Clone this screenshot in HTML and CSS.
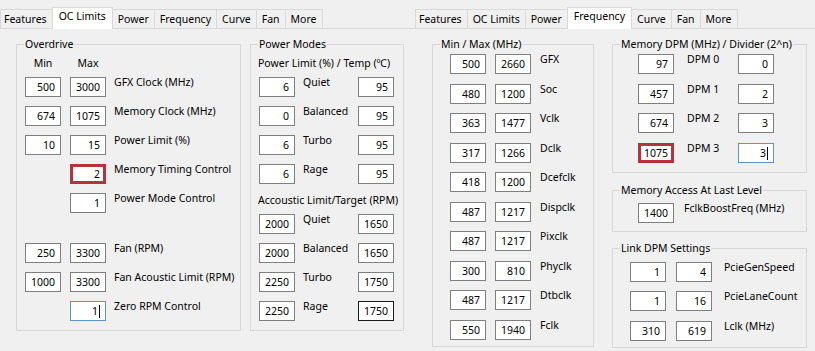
FILE: index.html
```html
<!DOCTYPE html>
<html lang="en">
<head>
    <meta charset="UTF-8">
    <meta name="viewport" content="width=device-width, initial-scale=1.0">
    <title>OC Limits / Frequency</title>
    <link rel="stylesheet" href="styles.css">
</head>
<body>
    <!-- first window: OC Limits tab -->
    <div class="window">
        <div class="tabs">
            <span class="tab">Features</span>
            <span class="tab active">OC Limits</span>
            <span class="tab">Power</span>
            <span class="tab">Frequency</span>
            <span class="tab">Curve</span>
            <span class="tab">Fan</span>
            <span class="tab">More</span>
        </div>
        <div class="page oc">
            <fieldset class="group overdrive">
                <legend>Overdrive</legend>
                <div class="rows">
                    <div class="head">
                        <span class="col-head">Min</span>
                        <span class="col-head">Max</span>
                    </div>
                    <div class="row"><span class="box">500</span><span class="box">3000</span><span class="label">GFX Clock (MHz)</span></div>
                    <div class="row"><span class="box">674</span><span class="box">1075</span><span class="label">Memory Clock (MHz)</span></div>
                    <div class="row"><span class="box">10</span><span class="box">15</span><span class="label">Power Limit (%)</span></div>
                    <div class="row"><span class="slot"></span><span class="box warn">2</span><span class="label">Memory Timing Control</span></div>
                    <div class="row"><span class="slot"></span><span class="box">1</span><span class="label">Power Mode Control</span></div>
                    <div class="row spaced"><span class="box">250</span><span class="box">3300</span><span class="label">Fan (RPM)</span></div>
                    <div class="row"><span class="box">1000</span><span class="box">3300</span><span class="label">Fan Acoustic Limit (RPM)</span></div>
                    <div class="row"><span class="slot"></span><span class="box focus">1<span class="caret"></span></span><span class="label">Zero RPM Control</span></div>
                </div>
            </fieldset>
            <fieldset class="group modes">
                <legend>Power Modes</legend>
                <div class="rows">
                    <div class="head">Power Limit (%) / Temp (℃)</div>
                    <div class="row"><span class="box">6</span><span class="label">Quiet</span><span class="box">95</span></div>
                    <div class="row"><span class="box">0</span><span class="label">Balanced</span><span class="box">95</span></div>
                    <div class="row"><span class="box">6</span><span class="label">Turbo</span><span class="box">95</span></div>
                    <div class="row"><span class="box">6</span><span class="label">Rage</span><span class="box">95</span></div>
                    <div class="head second">Accoustic Limit/Target (RPM)</div>
                    <div class="row"><span class="box">2000</span><span class="label">Quiet</span><span class="box">1650</span></div>
                    <div class="row"><span class="box">2000</span><span class="label">Balanced</span><span class="box">1650</span></div>
                    <div class="row"><span class="box">2250</span><span class="label">Turbo</span><span class="box">1750</span></div>
                    <div class="row"><span class="box">2250</span><span class="label">Rage</span><span class="box hover">1750</span></div>
                </div>
            </fieldset>
        </div>
    </div>

    <!-- second window: Frequency tab -->
    <div class="window narrow">
        <div class="tabs">
            <span class="tab">Features</span>
            <span class="tab">OC Limits</span>
            <span class="tab">Power</span>
            <span class="tab active">Frequency</span>
            <span class="tab">Curve</span>
            <span class="tab">Fan</span>
            <span class="tab">More</span>
        </div>
        <div class="page freq">
            <fieldset class="group minmax">
                <legend>Min / Max (MHz)</legend>
                <div class="rows">
                    <div class="row"><span class="box">500</span><span class="box">2660</span><span class="label">GFX</span></div>
                    <div class="row"><span class="box">480</span><span class="box">1200</span><span class="label">Soc</span></div>
                    <div class="row"><span class="box">363</span><span class="box">1477</span><span class="label">Vclk</span></div>
                    <div class="row"><span class="box">317</span><span class="box">1266</span><span class="label">Dclk</span></div>
                    <div class="row"><span class="box">418</span><span class="box">1200</span><span class="label">Dcefclk</span></div>
                    <div class="row"><span class="box">487</span><span class="box">1217</span><span class="label">Dispclk</span></div>
                    <div class="row"><span class="box">487</span><span class="box">1217</span><span class="label">Pixclk</span></div>
                    <div class="row"><span class="box">300</span><span class="box">810</span><span class="label">Phyclk</span></div>
                    <div class="row"><span class="box">487</span><span class="box">1217</span><span class="label">Dtbclk</span></div>
                    <div class="row"><span class="box">550</span><span class="box">1940</span><span class="label">Fclk</span></div>
                </div>
            </fieldset>
            <div class="stack">
                <fieldset class="group dpm">
                    <legend>Memory DPM (MHz) / Divider (2^n)</legend>
                    <div class="rows">
                        <div class="row"><span class="box">97</span><span class="label">DPM 0</span><span class="box">0</span></div>
                        <div class="row"><span class="box">457</span><span class="label">DPM 1</span><span class="box">2</span></div>
                        <div class="row"><span class="box">674</span><span class="label">DPM 2</span><span class="box">3</span></div>
                        <div class="row"><span class="box warn">1075</span><span class="label">DPM 3</span><span class="box focus">3<span class="caret"></span></span></div>
                    </div>
                </fieldset>
                <fieldset class="group access">
                    <legend>Memory Access At Last Level</legend>
                    <div class="rows">
                        <div class="row"><span class="box">1400</span><span class="label">FclkBoostFreq (MHz)</span></div>
                    </div>
                </fieldset>
                <fieldset class="group link">
                    <legend>Link DPM Settings</legend>
                    <div class="rows">
                        <div class="row"><span class="box">1</span><span class="box">4</span><span class="label">PcieGenSpeed</span></div>
                        <div class="row"><span class="box">1</span><span class="box">16</span><span class="label">PcieLaneCount</span></div>
                        <div class="row"><span class="box">310</span><span class="box">619</span><span class="label">Lclk (MHz)</span></div>
                    </div>
                </fieldset>
            </div>
        </div>
    </div>
</body>
</html>
```

FILE: styles.css
```css
/* Reset */
* {
    margin: 0;
    padding: 0;
    box-sizing: border-box;
}

body {
    font-family: "Noto Sans", "DejaVu Sans", sans-serif;
    font-size: 10.5px;
    color: #000;
    background: #f0f0f0;
    display: flex;
    height: 351px;
    overflow: hidden;
}

/* Two captured windows side by side */
.window {
    flex: none;
    width: 415px;
}

.window.narrow {
    width: 400px;
}

/* Tab strip */
.tabs {
    display: flex;
    align-items: flex-end;
    height: 29px;
    border-bottom: 1px solid #d9d9d9;
}

.tab {
    height: 19px;
    line-height: 18px;
    padding: 0 5px;
    margin-left: -1px;
    border: 1px solid #d9d9d9;
    border-bottom: none;
    background: #f0f0f0;
    white-space: nowrap;
}

.tab:first-child {
    margin-left: 0;
    padding-left: 3px;
}

.tab.active {
    position: relative;
    height: 22px;
    line-height: 17px;
    margin-bottom: -1px;
    padding: 0 6px;
    background: #fff;
}

/* Tab page */
.page {
    display: flex;
    align-items: flex-start;
    padding: 7.5px 0 0 16px;
}

.page.oc {
    gap: 9px;
}

.page.freq {
    padding-left: 17px;
    gap: 18px;
}

.stack {
    display: flex;
    flex-direction: column;
}

/* Group boxes */
.group {
    border: 1px solid #d7d7d7;
    padding: 0 7px;
    min-width: 0;
}

.group legend {
    padding: 0 1px;
    line-height: 15px;
    white-space: nowrap;
}

.overdrive { width: 225px; height: 294.5px; }
.modes { width: 154px; height: 294.5px; }
.minmax { width: 162px; height: 310.5px; }
.dpm { width: 195px; height: 136.5px; }
.access { width: 195px; height: 49.5px; margin-top: 9.5px; }
.link { width: 195px; height: 107.5px; margin-top: 8.5px; }

/* Rows of fields */
.rows {
    display: flex;
    flex-direction: column;
}

.row {
    display: flex;
    align-items: flex-start;
    height: 20px;
    column-gap: 9px;
}

.head {
    display: flex;
    column-gap: 9px;
    line-height: 15px;
    white-space: nowrap;
}

.col-head {
    width: 36px;
    text-align: center;
}

.label {
    line-height: 15px;
    margin-top: -2px;
    white-space: nowrap;
}

.box {
    flex: none;
    width: 36px;
    height: 20px;
    padding-right: 5px;
    background: #fff;
    border: 1px solid #7f7f7f;
    text-align: right;
    line-height: 18px;
}

.slot {
    flex: none;
    width: 36px;
}

.box.warn {
    border: 3px solid #b8323c;
    padding-right: 3px;
    line-height: 14px;
}

.box.focus {
    border-color: #5b95cc;
}

.box.hover {
    border-color: #1a1a1a;
}

.caret {
    display: inline-block;
    width: 1px;
    height: 13px;
    margin-left: 1px;
    vertical-align: -3px;
    background: #000;
}

/* Overdrive group */
.overdrive .rows {
    padding: 4px 0 0 1px;
}

.overdrive .head {
    margin-bottom: 6.5px;
}

.overdrive .row {
    margin-bottom: 9px;
}

.overdrive .row .label {
    margin-left: -1px;
}

.overdrive .row.spaced {
    margin-top: 21px;
}

/* Power modes group */
.modes .rows {
    padding: 4px 0 0 1px;
}

.modes .head {
    margin-left: -1px;
    margin-bottom: 6.5px;
}

.modes .head.second {
    margin-top: 0;
    margin-bottom: 6px;
}

.modes .row {
    column-gap: 8px;
    margin-bottom: 9px;
}

.modes .label {
    width: 47px;
}

/* Frequency page groups */
.minmax .rows {
    padding: 2.5px 0 0 10px;
}

.minmax .row,
.dpm .row,
.link .row {
    margin-bottom: 9.5px;
}

.dpm .rows {
    padding: 2.5px 0 0 18px;
}

.dpm .row {
    column-gap: 13px;
}

.dpm .label {
    width: 38px;
}

.access .rows {
    padding: 5.5px 0 0 18px;
}

.access .row {
    column-gap: 10px;
}

.link .rows {
    padding: 6px 0 0 10px;
}

.link .row {
    column-gap: 10px;
}

.link .row .label {
    margin-left: 2px;
}
```
